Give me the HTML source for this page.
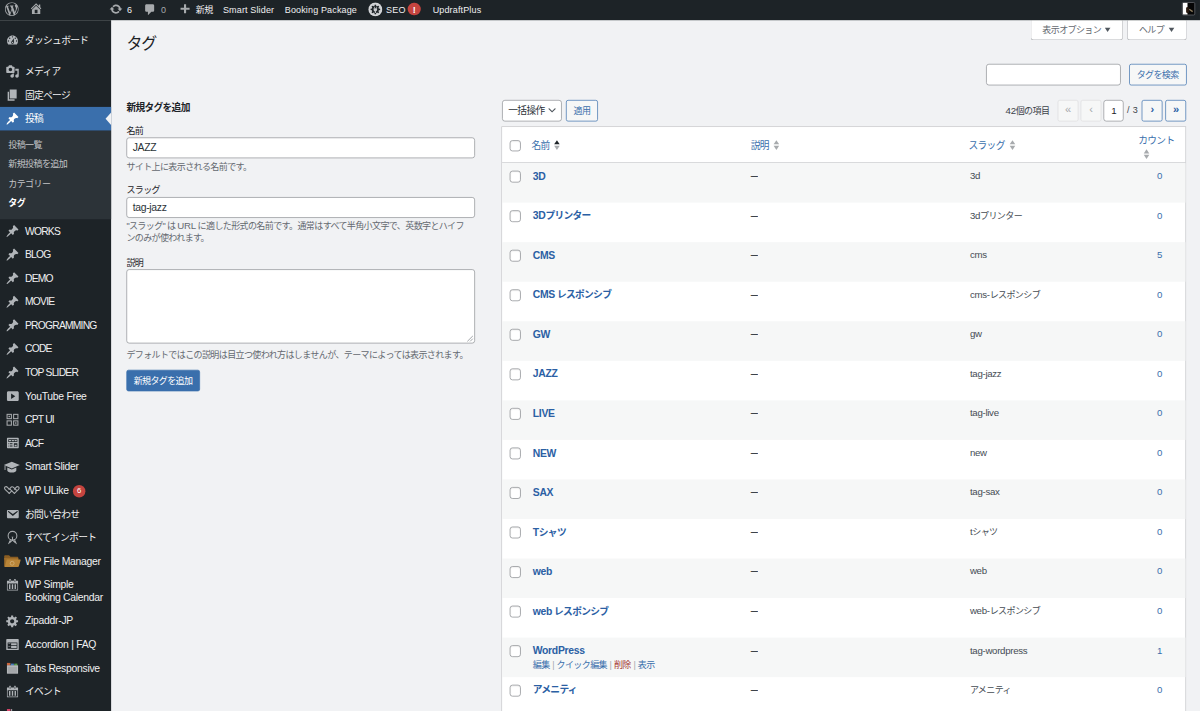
<!DOCTYPE html>
<html lang="ja">
<head>
<meta charset="utf-8">
<title>タグ ‹ WordPress</title>
<style>
html,body{margin:0;padding:0;width:1200px;height:711px;overflow:hidden;background:#f1f2f4;}
body{font-family:"Liberation Sans","Noto Sans CJK JP",sans-serif;color:#3c434a;}
#stage{position:absolute;left:0;top:-2.4px;width:1728px;height:1030px;transform:scale(0.69444,0.6937);transform-origin:0 0;opacity:0.999;font-size:13px;line-height:1.4;background:#f1f2f4;overflow:hidden;}
a{text-decoration:none;color:#3a6fac;}
svg{display:block;}
b.l{font-weight:inherit;}
#stage *{letter-spacing:-0.07em;}
#stage .l{letter-spacing:-0.03em;font-size:107%;}
#stage .l *{letter-spacing:inherit;}
#stage .u{letter-spacing:-0.075em;font-size:106%;}
#stage #menu .l{letter-spacing:-0.028em;}
#stage #bar .l{letter-spacing:0.015em;}

/* ---------- admin bar ---------- */
#bar{position:absolute;left:0;top:0;width:1728px;height:32px;background:#1d2327;color:#f0f0f1;z-index:5;}
#bar .it{position:absolute;top:1px;height:32px;line-height:32px;font-size:13px;color:#f0f0f1;white-space:nowrap;}
#bar svg{position:absolute;fill:#a7aaad;}
#bar .dim{color:#a7aaad;}

/* ---------- side menu ---------- */
#menu{position:absolute;left:0;top:32px;width:160px;height:1000px;background:#1d2327;}
#menu ul{list-style:none;margin:12.2px 0 0;padding:0;}
#menu li.m{position:relative;height:34px;color:#f0f0f1;font-size:14px;line-height:18px;}
#menu li.m .ic{position:absolute;left:8px;top:7px;width:20px;height:20px;}
#menu li.m .ic svg{width:20px;height:20px;fill:#b0b4b8;}
#menu li.m .nm{position:absolute;left:36px;top:8px;white-space:nowrap;}
#menu li.sep{height:5px;margin:0 0 6px;}
#menu li.cur{background:#3a6fac;color:#fff;}
#menu li.cur .ic svg{fill:#fff;}
#menu li.cur:after{content:"";position:absolute;right:0;top:8px;border:9px solid transparent;border-right-width:8px;border-right-color:#f1f2f4;}
#menu li.sub{background:#2c3338;padding:6.5px 0 8.2px;}
#menu li.sub a{display:block;color:#c3c4c7;font-size:13px;line-height:18.2px;padding:5px 12px;}
#menu li.sub a.on{color:#fff;font-weight:bold;}
#menu li.two{height:52px;}
#menu .badge{display:inline-block;vertical-align:top;box-sizing:border-box;margin:1px 0 -1px 2px;padding:0 5px;min-width:18px;height:18px;border-radius:9px;background:#c5443f;color:#fff;font-size:11px;line-height:1.6;text-align:center;}

/* ---------- content ---------- */
#content{position:absolute;left:160px;top:32px;width:1568px;height:1000px;}
.abs{position:absolute;}
h1{position:absolute;left:22px;top:19px;margin:0;font-size:23px;font-weight:400;line-height:29.9px;color:#1d2327;}
.metabtn{position:absolute;top:0;height:28px;box-sizing:content-box;border:1.2px solid #b4b6ba;border-top:none;border-radius:0 0 4px 4px;background:#fff;color:#646970;font-size:13px;line-height:28px;white-space:nowrap;}
.metabtn i{position:absolute;top:11px;width:0;height:0;border:4px solid transparent;border-top:6px solid #50575e;border-bottom:none;}
.inp{position:absolute;box-sizing:border-box;background:#fff;border:1.25px solid #8c8f94;border-radius:4px;font-size:14px;color:#2c3338;padding:0 8px;line-height:28px;white-space:nowrap;}
.btn2{position:absolute;box-sizing:border-box;height:30px;border:1.3px solid #3a6fac;border-radius:3px;background:#f6f7f7;color:#3a6fac;font-size:13px;line-height:28px;text-align:center;white-space:nowrap;}
.btn1{position:absolute;box-sizing:border-box;height:30px;border:1px solid #3a6fac;border-radius:3px;background:#3a6fac;color:#fff;font-size:13px;line-height:28px;text-align:center;white-space:nowrap;}
.lab{position:absolute;left:22px;font-size:13px;line-height:18.2px;color:#1d2327;white-space:nowrap;}
.desc{position:absolute;left:22px;width:540px;font-size:13px;line-height:18.2px;color:#646970;}
.pg{position:absolute;top:114.5px;box-sizing:border-box;height:31px;min-width:30px;border-radius:3px;font-size:16px;line-height:26px;text-align:center;}
.pg.dis{border:1px solid #dcdcde;background:#f6f7f7;color:#a7aaad;}
.pg.en{border:1.3px solid #3a6fac;background:#f6f7f7;color:#2b60a4;font-weight:bold;}

/* ---------- table ---------- */
#tbl{position:absolute;left:562.2px;top:152.5px;width:986px;border:1px solid #c3c4c7;background:#fff;box-sizing:border-box;height:900px;box-shadow:0 1px 1px rgba(0,0,0,.04);}
#tbl .hd{position:relative;height:51.7px;border-bottom:1.3px solid #c0c1c4;font-size:14px;line-height:18.2px;color:#3a6fac;}
#tbl .r{position:relative;height:57px;font-size:13px;line-height:19.5px;color:#454c53;}
#tbl .r.o{background:#f6f7f7;}
#tbl .cb{position:absolute;left:10.5px;box-sizing:border-box;width:16.5px;height:16.5px;border:1.3px solid #85888d;border-radius:4px;background:#fff;box-shadow:inset 0 1px 2px rgba(0,0,0,.1);}
#tbl .hd .cb{top:19px;}
#tbl .r .cb{top:11px;}
#tbl .c1,#tbl .c2,#tbl .c3,#tbl .c4{position:absolute;top:8.9px;white-space:nowrap;}
#tbl .hd .c1,#tbl .hd .c2,#tbl .hd .c3{top:18px;}
#tbl .c1{left:42px;}
#tbl .c2{left:358px;}
#tbl .r .c2{color:#3c434a;font-weight:bold;transform:scaleX(.8);transform-origin:0 50%;}
#tbl .c3{left:671.5px;}
#tbl .r .c3{left:673.5px;}
#tbl .c4{left:909.5px;width:74px;text-align:center;color:#3a6fac;}
#tbl .r .c1{font-size:14px;font-weight:bold;color:#2b60a4;left:44px;}
.ra{word-spacing:1.1px;position:absolute;left:44px;top:30.2px;font-size:13px;line-height:19.5px;color:#a7aaad;white-space:nowrap;}
.ra a{color:#3a6fac;}
.ra a.del{color:#a53934;}
.sort{display:inline-block;vertical-align:top;position:relative;width:10px;height:18px;margin-left:6px;}
.sort:before,.sort:after{content:"";position:absolute;left:1px;border:4px solid transparent;}
.sort:before{top:1px;border-bottom:6px solid #a7aaad;border-top:none;}
.sort:after{top:9.5px;border-top:6px solid #a7aaad;border-bottom:none;}
.sort.asc:before{border-bottom-color:#1d2327;}
</style>
</head>
<body>
<div id="stage">

<!-- ADMIN BAR -->
<div id="bar">
<svg viewBox="0 0 20 20" style="left:7px;top:6px;width:20px;height:20px"><path d="M20 10c0-5.51-4.49-10-10-10C4.48 0 0 4.49 0 10c0 5.52 4.48 10 10 10 5.51 0 10-4.48 10-10zM7.78 15.37L4.37 6.22c.55-.02 1.17-.08 1.17-.08.5-.06.44-1.13-.06-1.11 0 0-1.45.11-2.37.11-.18 0-.37 0-.58-.01C4.12 2.69 6.87 1.11 10 1.11c2.33 0 4.45.87 6.05 2.34-.68-.11-1.65.39-1.65 1.58 0 .74.45 1.36.9 2.1.35.61.55 1.36.55 2.46 0 1.49-1.4 5-1.4 5l-3.03-8.37c.54-.02.82-.17.82-.17.5-.05.44-1.25-.06-1.22 0 0-1.44.12-2.38.12-.87 0-2.33-.12-2.33-.12-.5-.03-.56 1.2-.06 1.22l.92.08 1.26 3.41zM17.41 10c.24-.64.74-1.87.43-4.25.7 1.29 1.05 2.71 1.05 4.25 0 3.29-1.73 6.24-4.4 7.78.97-2.59 1.94-5.2 2.92-7.78zM6.1 18.09C3.12 16.65 1.11 13.53 1.11 10c0-1.3.23-2.48.72-3.59C3.25 10.3 4.67 14.2 6.1 18.09zm4.03-6.63l2.58 6.98c-.86.29-1.76.45-2.71.45-.79 0-1.57-.11-2.29-.33.81-2.38 1.62-4.74 2.42-7.1z"/></svg>
<svg viewBox="0 0 20 20" style="left:42px;top:5px;width:20px;height:20px"><path d="M16 8.5l1.53 1.53-1.06 1.06L10 4.62l-6.47 6.47-1.06-1.06L10 2.5l4 4v-2h2v4zm-6-2.46l6 5.99V18H4v-5.97zM12 17v-5H8v5h4z"/></svg>
<svg viewBox="0 0 20 20" style="left:157px;top:6px;width:20px;height:20px"><path d="M10.2 3.28c3.53 0 6.43 2.61 6.92 6h2.08l-3.5 4-3.5-4h2.32c-.45-1.97-2.21-3.45-4.32-3.45-1.45 0-2.73.71-3.54 1.78L4.95 5.66C6.23 4.2 8.11 3.28 10.2 3.28zm-.4 13.44c-3.52 0-6.43-2.61-6.92-6H.8l3.5-4c1.17 1.33 2.33 2.67 3.5 4H5.480c.45 1.97 2.21 3.45 4.32 3.45 1.45 0 2.73-.71 3.54-1.78l1.710 1.95c-1.28 1.46-3.15 2.38-5.25 2.38z"/></svg>
<div class="it l" style="left:183px">6</div>
<svg viewBox="0 0 20 20" style="left:206px;top:7px;width:20px;height:20px"><path d="M5 2h9c1.1 0 2 .9 2 2v7c0 1.1-.9 2-2 2h-2l-5 5v-5H5c-1.100 0-2-.9-2-2V4c0-1.1.9-2 2-2z"/></svg>
<div class="it dim l" style="left:232px">0</div>
<svg viewBox="0 0 20 20" style="left:256px;top:7px;width:20px;height:20px"><path d="M17 7v3h-5v5H9v-5H4V7h5V2h3v5h5z"/></svg>
<div class="it" style="left:282px">新規</div>
<div class="it l" style="left:321px">Smart Slider</div>
<div class="it l" style="left:410px">Booking Package</div>
<svg viewBox="0 0 20 20" style="left:529.5px;top:5.5px;width:21px;height:21px"><circle cx="10" cy="10" r="9.500" fill="#c9cbce"/><circle cx="10" cy="10" r="8.300" fill="none" stroke="#dfe0e2" stroke-width=".8"/><path d="M9.14 3.46 L10.86 3.46 L11.27 5.27 L12.45 5.75 L14.02 4.77 L15.23 5.98 L14.25 7.55 L14.73 8.73 L16.54 9.14 L16.54 10.86 L14.73 11.27 L14.25 12.45 L15.23 14.02 L14.02 15.23 L12.45 14.25 L11.27 14.73 L10.86 16.54 L9.14 16.54 L8.73 14.73 L7.55 14.25 L5.98 15.23 L4.77 14.02 L5.75 12.45 L5.27 11.27 L3.46 10.86 L3.46 9.14 L5.27 8.73 L5.75 7.55 L4.77 5.98 L5.98 4.77 L7.55 5.75 L8.73 5.27Z" fill="#1d2327"/><path d="M7.600 8.200h4.800v2.200c0 1.200-.8 2-1.700 2.200v2.200H9.300v-2.200c-.9-.2-1.700-1-1.700-2.200z" fill="#c9cbce"/><path d="M8.300 6.300h.9v2h-.9zM10.800 6.300h.9v2h-.9z" fill="#c9cbce"/></svg>
<div class="it l" style="left:556px">SEO</div>
<div class="abs" style="left:587px;top:6.5px;width:18.5px;height:18.5px;border-radius:10px;line-height:18.5px;background:#c5443f;color:#fff;font-size:13px;font-weight:bold;line-height:20px;text-align:center">!</div>
<div class="it l" style="left:623px">UpdraftPlus</div>
<div class="abs" style="left:1702px;top:6px;width:19px;height:19px;background:#050505;border:1px solid #6c7076;border-radius:2px;box-sizing:border-box;overflow:hidden"><span style="position:absolute;left:0;top:0;width:7px;height:17px;background:#fdfdfd"></span><span style="position:absolute;left:5px;top:6px;width:4px;height:9px;background:#2a1a10;border-radius:2px"></span><span style="position:absolute;left:9px;top:10px;width:6px;height:2px;background:#8a7a5c;transform:rotate(35deg)"></span></div>
</div>

<!-- SIDE MENU -->
<div id="menu">
<ul>
<li class="m "><span class="ic"><svg viewBox="0 0 20 20"><path d="M3.76 16h12.48c1.1-1.37 1.76-3.11 1.76-5 0-4.42-3.58-8-8-8s-8 3.58-8 8c0 1.89.66 3.63 1.76 5zM10 4c.55 0 1 .45 1 1s-.45 1-1 1-1-.45-1-1 .45-1 1-1zM6 6c.55 0 1 .45 1 1s-.45 1-1 1-1-.45-1-1 .45-1 1-1zm8 0c.55 0 1 .45 1 1s-.45 1-1 1-1-.45-1-1 .45-1 1-1zm-5.37 5.55L12 7v6c0 1.1-.9 2-2 2s-2-.9-2-2c0-.57.24-1.08.63-1.45zM4 10c.55 0 1 .45 1 1s-.45 1-1 1-1-.45-1-1 .45-1 1-1zm12 0c.55 0 1 .45 1 1s-.45 1-1 1-1-.45-1-1 .45-1 1-1zm-5 3c0-.55-.45-1-1-1s-1 .45-1 1 .45 1 1 1 1-.45 1-1z"/></svg></span><span class="nm">ダッシュボード</span></li>
<li class="sep"></li>
<li class="m "><span class="ic"><svg viewBox="0 0 20 20"><path d="M13 11V4c0-.55-.45-1-1-1h-1.67L9 1H5L3.67 3H2c-.55 0-1 .45-1 1v7c0 .55.45 1 1 1h10c.55 0 1-.45 1-1zM7 4.5c1.38 0 2.5 1.12 2.5 2.5S8.38 9.500 7 9.500 4.500 8.380 4.500 7 5.620 4.500 7 4.500zM14 6h5v10.500c0 1.380-1.120 2.500-2.500 2.500S14 17.880 14 16.500s1.120-2.500 2.500-2.500c.17 0 .34.02.5.05V9h-3V6zm-4 8.050V13h2v3.500c0 1.380-1.120 2.500-2.500 2.500S7 17.880 7 16.500 8.120 14 9.500 14c.17 0 .34.02.5.05z"/></svg></span><span class="nm">メディア</span></li>
<li class="m "><span class="ic"><svg viewBox="0 0 20 20"><path d="M6 15V2h10v13H6zm-1 1h8v2H3V5h2v11z"/></svg></span><span class="nm">固定ページ</span></li>
<li class="m cur"><span class="ic"><svg viewBox="0 0 20 20"><path d="M10.44 3.02l1.82-1.82 6.36 6.35-1.83 1.82c-1.05-.68-2.48-.57-3.41.36l-.75.75c-.92.93-1.04 2.35-.35 3.41l-1.83 1.82-2.41-2.41-2.8 2.79c-.42.42-3.38 2.71-3.8 2.29s1.860-3.390 2.280-3.810l2.790-2.790L4.100 9.360l1.830-1.820c1.050.69 2.480.57 3.400-.36l.75-.75c.93-.92 1.050-2.350.36-3.410z"/></svg></span><span class="nm">投稿</span></li>
<li class="sub"><a>投稿一覧</a><a>新規投稿を追加</a><a>カテゴリー</a><a class="on">タグ</a></li>
<li class="m "><span class="ic"><svg viewBox="0 0 20 20"><path d="M10.44 3.02l1.82-1.82 6.36 6.35-1.83 1.82c-1.05-.68-2.48-.57-3.41.36l-.75.75c-.92.93-1.04 2.35-.35 3.41l-1.83 1.82-2.41-2.41-2.8 2.79c-.42.42-3.38 2.71-3.8 2.29s1.860-3.390 2.280-3.810l2.790-2.790L4.100 9.360l1.830-1.820c1.050.69 2.480.57 3.400-.36l.75-.75c.93-.92 1.050-2.350.36-3.410z"/></svg></span><span class="nm u">WORKS</span></li>
<li class="m "><span class="ic"><svg viewBox="0 0 20 20"><path d="M10.44 3.02l1.82-1.82 6.36 6.35-1.83 1.82c-1.05-.68-2.48-.57-3.41.36l-.75.75c-.92.93-1.04 2.35-.35 3.41l-1.83 1.82-2.41-2.41-2.8 2.79c-.42.42-3.38 2.71-3.8 2.29s1.860-3.390 2.280-3.810l2.790-2.790L4.100 9.360l1.830-1.820c1.050.69 2.480.57 3.400-.36l.75-.75c.93-.92 1.050-2.350.36-3.410z"/></svg></span><span class="nm u">BLOG</span></li>
<li class="m "><span class="ic"><svg viewBox="0 0 20 20"><path d="M10.44 3.02l1.82-1.82 6.36 6.35-1.83 1.82c-1.05-.68-2.48-.57-3.41.36l-.75.75c-.92.93-1.04 2.35-.35 3.41l-1.83 1.82-2.41-2.41-2.8 2.79c-.42.42-3.38 2.71-3.8 2.29s1.860-3.390 2.280-3.810l2.790-2.790L4.100 9.360l1.830-1.820c1.050.69 2.480.57 3.400-.36l.75-.75c.93-.92 1.050-2.350.36-3.410z"/></svg></span><span class="nm u">DEMO</span></li>
<li class="m "><span class="ic"><svg viewBox="0 0 20 20"><path d="M10.44 3.02l1.82-1.82 6.36 6.35-1.83 1.82c-1.05-.68-2.48-.57-3.41.36l-.75.75c-.92.93-1.04 2.35-.35 3.41l-1.83 1.82-2.41-2.41-2.8 2.79c-.42.42-3.38 2.71-3.8 2.29s1.860-3.390 2.280-3.810l2.790-2.790L4.100 9.360l1.830-1.820c1.050.69 2.480.57 3.400-.36l.75-.75c.93-.92 1.050-2.350.36-3.410z"/></svg></span><span class="nm u">MOVIE</span></li>
<li class="m "><span class="ic"><svg viewBox="0 0 20 20"><path d="M10.44 3.02l1.82-1.82 6.36 6.35-1.83 1.82c-1.05-.68-2.48-.57-3.41.36l-.75.75c-.92.93-1.04 2.35-.35 3.41l-1.83 1.82-2.41-2.41-2.8 2.79c-.42.42-3.38 2.71-3.8 2.29s1.860-3.390 2.280-3.810l2.790-2.790L4.100 9.360l1.830-1.820c1.050.69 2.480.57 3.400-.36l.75-.75c.93-.92 1.050-2.350.36-3.410z"/></svg></span><span class="nm u">PROGRAMMING</span></li>
<li class="m "><span class="ic"><svg viewBox="0 0 20 20"><path d="M10.44 3.02l1.82-1.82 6.36 6.35-1.83 1.82c-1.05-.68-2.48-.57-3.41.36l-.75.75c-.92.93-1.04 2.35-.35 3.41l-1.83 1.82-2.41-2.41-2.8 2.79c-.42.42-3.38 2.71-3.8 2.29s1.860-3.390 2.280-3.810l2.790-2.790L4.100 9.360l1.830-1.820c1.050.69 2.480.57 3.400-.36l.75-.75c.93-.92 1.050-2.350.36-3.410z"/></svg></span><span class="nm u">CODE</span></li>
<li class="m "><span class="ic"><svg viewBox="0 0 20 20"><path d="M10.44 3.02l1.82-1.82 6.36 6.35-1.83 1.82c-1.05-.68-2.48-.57-3.41.36l-.75.75c-.92.93-1.04 2.35-.35 3.41l-1.83 1.82-2.41-2.41-2.8 2.79c-.42.42-3.38 2.71-3.8 2.29s1.860-3.390 2.280-3.810l2.790-2.790L4.100 9.360l1.830-1.820c1.050.69 2.480.57 3.400-.36l.75-.75c.93-.92 1.050-2.350.36-3.410z"/></svg></span><span class="nm u">TOP SLIDER</span></li>
<li class="m "><span class="ic"><svg viewBox="0 0 20 20"><path d="M19 15V5c0-1.100-.9-2-2-2H4c-1.100 0-2 .9-2 2v10c0 1.100.9 2 2 2h13c1.100 0 2-.9 2-2zM8 14V6l6 4z"/></svg></span><span class="nm l">YouTube Free</span></li>
<li class="m "><span class="ic"><svg viewBox="0 0 20 20"><g fill="none" stroke="#a7aaad" stroke-width="1.5"><rect x="2.200" y="2.200" width="6.200" height="6.200"/><rect x="11.600" y="2.200" width="6.200" height="6.200"/><rect x="2.200" y="11.600" width="6.200" height="6.200"/><rect x="11.600" y="11.600" width="6.200" height="6.200"/></g><g fill="#a7aaad"><rect x="4.300" y="4.300" width="2" height="2"/><rect x="13.700" y="13.700" width="2" height="2"/></g></svg></span><span class="nm u">CPT UI</span></li>
<li class="m "><span class="ic"><svg viewBox="0 0 20 20"><path d="M19 16V3c0-.55-.45-1-1-1H3c-.55 0-1 .45-1 1v13c0 .55.45 1 1 1h15c.55 0 1-.45 1-1zM4 4h13v4H4V4zm1 1v2h3V5H5zm4 0v2h3V5H9zm4 0v2h3V5h-3zm-8.500 5c.28 0 .5.22.5.5s-.22.5-.5.5-.5-.22-.5-.5.22-.5.5-.5zM6 10h4v1H6v-1zm6 0h5v5h-5v-5zm-7.500 2c.28 0 .5.22.5.5s-.22.5-.5.5-.5-.22-.5-.5.22-.5.5-.5zM6 12h4v1H6v-1zm7 0v2h3v-2h-3zm-8.500 2c.28 0 .5.22.5.5s-.22.5-.5.5-.5-.22-.5-.5.22-.5.5-.5zM6 14h4v1H6v-1z"/></svg></span><span class="nm u">ACF</span></li>
<li class="m "><span class="ic"><svg viewBox="0 0 24 20" style="width:24px;height:20px;margin-left:-3px"><path d="M12 2.500L23.500 7.300 12 12.100.500 7.300z"/><path d="M5.500 10.800v4.200c0 1.700 3 3 6.500 3s6.500-1.300 6.500-3v-4.200L12 13.600z"/><path d="M1.600 8.300h1.300v6.200H1.600z"/></svg></span><span class="nm l">Smart Slider</span></li>
<li class="m "><span class="ic"><svg viewBox="0 0 24 20" style="width:24px;height:20px;margin-left:-3px"><g fill="none" stroke="#a7aaad" stroke-width="1.600" stroke-linejoin="round" stroke-linecap="round"><path d="M8.300 14.200L2.300 8.200c-1.300-1.300-.9-3.200.6-3.700 1.200-.4 2.300.1 3 1.100l2.400 2.600"/><path d="M8.300 8.200l2.300-2.600c.9-1.100 2.400-1.500 3.500-.6l4.600 4.600"/><path d="M8.300 14.200l3.600-3.700"/><path d="M15.700 14.200l-6-6"/><path d="M15.700 14.200l6-6c1.300-1.300.9-3.200-.6-3.700-1.200-.4-2.300.1-3 1.100l-2.400 2.600"/></g></svg></span><span class="nm l">WP ULike <span class="badge">6</span></span></li>
<li class="m "><span class="ic"><svg viewBox="0 0 20 20"><path d="M3.870 4h13.250C18.370 4 19 4.590 19 5.790v8.420c0 1.190-.63 1.790-1.880 1.790H3.870c-1.250 0-1.880-.6-1.880-1.790V5.790c0-1.200.63-1.790 1.880-1.790zm6.620 8.600l6.740-5.530c.24-.2.43-.66.13-1.070-.29-.41-.82-.42-1.170-.17l-5.700 3.860L4.800 5.830c-.35-.25-.88-.24-1.170.17-.3.41-.11.87.13 1.070z"/></svg></span><span class="nm">お問い合わせ</span></li>
<li class="m "><span class="ic"><svg viewBox="0 0 20 22" style="width:20px;height:22px;margin-top:-1px"><g fill="none" stroke="#a7aaad" stroke-width="1.500" stroke-linecap="round"><circle cx="10" cy="8.200" r="6.300"/><path d="M7.200 13.800L4.600 19.500M12.800 13.800l2.600 5.700M10 11v3.500l-4 3.500M10 14.500l4 3.500"/></g><path fill="#a7aaad" d="M8.500 9.500h3l-1.500 2.200z"/></svg></span><span class="nm">すべてインポート</span></li>
<li class="m "><span class="ic"><svg viewBox="0 0 24 20" style="width:25px;height:21px;margin:-1px 0 0 -3px"><path fill="#8a5d22" d="M1 3.500C1 2.700 1.700 2 2.500 2h5.200l2 2.200H19c.8 0 1.500.7 1.500 1.500V8H1z"/><path fill="#a06e2a" d="M1 6h19.500v11c0 .8-.7 1.500-1.500 1.500H2.500C1.700 18.500 1 17.800 1 17z"/><path fill="#b98538" d="M4.500 8H23c.6 0 1 .5.8 1.100l-2.600 8.300c-.2.700-.8 1.100-1.500 1.100H1.800z"/><circle cx="12" cy="13.200" r="2.700" fill="none" stroke="#d9b985" stroke-width=".9"/></svg></span><span class="nm l">WP File Manager</span></li>
<li class="m two"><span class="ic"><svg viewBox="0 0 20 20"><path d="M15 4h3v14H2V4h3V3c0-.83.67-1.500 1.500-1.500S8 2.170 8 3v1h4V3c0-.83.67-1.500 1.500-1.500S15 2.170 15 3v1zM6 3v2.500c0 .28.22.5.5.5s.5-.22.5-.5V3c0-.28-.22-.5-.5-.5S6 2.720 6 3zm7 0v2.500c0 .28.22.5.5.5s.5-.22.5-.5V3c0-.28-.22-.5-.5-.5s-.5.22-.5.5zm4 14V8H3v9h14zM7 16V9H5v7h2zm4 0V9H9v7h2zm4 0V9h-2v7h2z"/></svg></span><span class="nm l">WP Simple<br>Booking Calendar</span></li>
<li class="m "><span class="ic"><svg viewBox="0 0 20 20"><path d="M18 12h-2.180c-.17.7-.44 1.350-.81 1.930l1.540 1.540-2.100 2.100-1.540-1.540c-.58.36-1.230.63-1.910.79V19H8v-2.180c-.68-.16-1.330-.43-1.910-.79l-1.540 1.540-2.120-2.120 1.540-1.540c-.36-.58-.63-1.230-.79-1.910H1V9.030h2.170c.16-.7.44-1.350.8-1.940L2.430 5.550l2.100-2.100 1.540 1.540c.58-.37 1.240-.64 1.930-.81V2h3v2.180c.68.16 1.330.43 1.910.79l1.540-1.540 2.120 2.120-1.540 1.540c.36.59.64 1.240.8 1.940H18V12zm-8.500 1.500c1.660 0 3-1.340 3-3s-1.340-3-3-3-3 1.340-3 3 1.340 3 3 3z"/></svg></span><span class="nm l">Zipaddr-JP</span></li>
<li class="m "><span class="ic"><svg viewBox="0 0 20 20"><path d="M2 2h16c.55 0 1 .45 1 1v14c0 .55-.45 1-1 1H2c-.55 0-1-.45-1-1V3c0-.55.45-1 1-1zm15 14V7H3v9h14zM4 8v1h3V8H4zm4 0v3h8V8H8zm-4 4v1h3v-1H4zm4 0v3h8v-3H8z"/></svg></span><span class="nm l">Accordion | FAQ</span></li>
<li class="m "><span class="ic"><svg viewBox="0 0 20 20"><rect x="2" y="2.500" width="5" height="4" fill="#c8643c"/><rect x="7.500" y="3.500" width="4.500" height="3" fill="#4a7fc0"/><rect x="12.500" y="3.500" width="4.500" height="3" fill="#58a04e"/><rect x="2" y="6" width="16" height="12" fill="#b9bcbf"/><rect x="3.200" y="8" width="13.600" height="8.800" fill="#a4a7aa"/></svg></span><span class="nm l">Tabs Responsive</span></li>
<li class="m "><span class="ic"><svg viewBox="0 0 20 20"><path d="M15 4h3v14H2V4h3V3c0-.83.67-1.500 1.500-1.500S8 2.170 8 3v1h4V3c0-.83.67-1.500 1.500-1.500S15 2.170 15 3v1zM6 3v2.500c0 .28.22.5.5.5s.5-.22.5-.5V3c0-.28-.22-.5-.5-.5S6 2.720 6 3zm7 0v2.500c0 .28.22.5.5.5s.5-.22.5-.5V3c0-.28-.22-.5-.5-.5s-.5.22-.5.5zm4 14V8H3v9h14zM7 16V9H5v7h2zm4 0V9H9v7h2zm4 0V9h-2v7h2z"/></svg></span><span class="nm">イベント</span></li>
<li class="m "><span class="ic"><svg viewBox="0 0 20 20"><rect x="2" y="1" width="5" height="18" fill="#d8456b"/><rect x="8" y="1" width="1.500" height="18" fill="#a7aaad"/></svg></span><span class="nm l">Timeline Addons</span></li>
</ul>
</div>

<!-- CONTENT -->
<div id="content">
<h1>タグ</h1>
<div class="metabtn" style="left:1324px;width:131px"><span style="position:absolute;left:16px">表示オプション</span><i style="left:106px"></i></div>
<div class="metabtn" style="left:1463px;width:84px"><span style="position:absolute;left:16px">ヘルプ</span><i style="left:58.5px"></i></div>

<div class="inp" style="left:1260px;top:62.5px;width:194px;height:31px"></div>
<div class="btn2" style="left:1465.500px;top:62.5px;width:83px;height:31px;line-height:29px">タグを検索</div>

<!-- add tag form -->
<div class="lab" style="top:117px;font-size:14px;font-weight:bold">新規タグを追加</div>
<div class="lab" style="top:150.7px">名前</div>
<div class="inp" style="left:22px;top:168.500px;width:502px;height:30.5px"><span class="l">JAZZ</span></div>
<div class="desc" style="top:202.500px">サイト上に表示される名前です。</div>
<div class="lab" style="top:235.700px">スラッグ</div>
<div class="inp" style="left:22px;top:254.500px;width:502px;height:30.5px"><span class="l">tag-jazz</span></div>
<div class="desc" style="top:287.200px">"スラッグ" は <span class="l">URL</span> に適した形式の名前です。通常はすべて半角小文字で、英数字とハイフ<br>ンのみが使われます。</div>
<div class="lab" style="top:342px">説明</div>
<div class="inp" style="left:22px;top:359px;width:502px;height:106.5px"><svg viewBox="0 0 10 10" style="position:absolute;right:1px;bottom:1px;width:10px;height:10px"><path d="M9 1L1 9M9 5L5 9" stroke="#787c82" stroke-width="1" fill="none"/></svg></div>
<div class="desc" style="top:474px">デフォルトではこの説明は目立つ使われ方はしませんが、テーマによっては表示されます。</div>
<div class="btn1" style="left:21.500px;top:503.5px;width:106.500px;height:31px;line-height:29px">新規タグを追加</div>

<!-- tablenav -->
<div class="inp" style="left:563px;top:114.5px;width:86px;height:31px;padding:0 0 0 8px;font-size:14px;color:#2c3338">一括操作<svg viewBox="0 0 20 20" style="position:absolute;right:5px;top:6px;width:16px;height:16px"><path d="M5 6l5 5 5-5 2 1-7 7-7-7z" fill="#50575e"/></svg></div>
<div class="btn2" style="left:655px;top:114.5px;width:46px;height:31px;line-height:29px">適用</div>
<div class="abs" style="left:1288px;top:115px;line-height:30px;font-size:13px;color:#3c434a;white-space:nowrap"><span class="l">42</span>個の項目</div>
<div class="pg dis" style="left:1362.500px">«</div>
<div class="pg dis" style="left:1395.500px">‹</div>
<div class="inp" style="left:1429px;top:114.5px;width:29px;height:31px;padding:0;text-align:center;font-size:14px;color:#1d2327">1</div>
<div class="abs" style="left:1463px;top:115px;line-height:30px;font-size:13px;color:#3c434a;white-space:nowrap;letter-spacing:0.03em" class="l">/ 3</div>
<div class="pg en" style="left:1484px">›</div>
<div class="pg en" style="left:1518px">»</div>

<!-- table -->
<div id="tbl">
<div class="hd"><span class="cb"></span><span class="c1">名前<i class="sort asc"></i></span><span class="c2">説明<i class="sort"></i></span><span class="c3">スラッグ<i class="sort"></i></span><span class="c4" style="left:905px;top:10px">カウント</span><i class="sort" style="position:absolute;left:922.5px;top:31px;margin:0"></i></div>
<div class="r o"><span class="cb"></span><a class="c1"><b class="l">3D</b></a><span class="c2">—</span><span class="c3"><b class="l">3d</b></span><a class="c4"><b class="l">0</b></a></div>
<div class="r"><span class="cb"></span><a class="c1"><b class="l">3D</b>プリンター</a><span class="c2">—</span><span class="c3"><b class="l">3d</b>プリンター</span><a class="c4"><b class="l">0</b></a></div>
<div class="r o"><span class="cb"></span><a class="c1"><b class="l">CMS</b></a><span class="c2">—</span><span class="c3"><b class="l">cms</b></span><a class="c4"><b class="l">5</b></a></div>
<div class="r"><span class="cb"></span><a class="c1"><b class="l">CMS</b> レスポンシブ</a><span class="c2">—</span><span class="c3"><b class="l">cms-</b>レスポンシブ</span><a class="c4"><b class="l">0</b></a></div>
<div class="r o"><span class="cb"></span><a class="c1"><b class="l">GW</b></a><span class="c2">—</span><span class="c3"><b class="l">gw</b></span><a class="c4"><b class="l">0</b></a></div>
<div class="r"><span class="cb"></span><a class="c1"><b class="l">JAZZ</b></a><span class="c2">—</span><span class="c3"><b class="l">tag-jazz</b></span><a class="c4"><b class="l">0</b></a></div>
<div class="r o"><span class="cb"></span><a class="c1"><b class="l">LIVE</b></a><span class="c2">—</span><span class="c3"><b class="l">tag-live</b></span><a class="c4"><b class="l">0</b></a></div>
<div class="r"><span class="cb"></span><a class="c1"><b class="l">NEW</b></a><span class="c2">—</span><span class="c3"><b class="l">new</b></span><a class="c4"><b class="l">0</b></a></div>
<div class="r o"><span class="cb"></span><a class="c1"><b class="l">SAX</b></a><span class="c2">—</span><span class="c3"><b class="l">tag-sax</b></span><a class="c4"><b class="l">0</b></a></div>
<div class="r"><span class="cb"></span><a class="c1"><b class="l">T</b>シャツ</a><span class="c2">—</span><span class="c3"><b class="l">t</b>シャツ</span><a class="c4"><b class="l">0</b></a></div>
<div class="r o"><span class="cb"></span><a class="c1"><b class="l">web</b></a><span class="c2">—</span><span class="c3"><b class="l">web</b></span><a class="c4"><b class="l">0</b></a></div>
<div class="r"><span class="cb"></span><a class="c1"><b class="l">web</b> レスポンシブ</a><span class="c2">—</span><span class="c3"><b class="l">web-</b>レスポンシブ</span><a class="c4"><b class="l">0</b></a></div>
<div class="r o"><span class="cb"></span><a class="c1"><b class="l">WordPress</b></a><div class="ra"><a>編集</a> | <a>クイック編集</a> | <a class="del">削除</a> | <a>表示</a></div><span class="c2">—</span><span class="c3"><b class="l">tag-wordpress</b></span><a class="c4"><b class="l">1</b></a></div>
<div class="r"><span class="cb"></span><a class="c1">アメニティ</a><span class="c2">—</span><span class="c3">アメニティ</span><a class="c4"><b class="l">0</b></a></div>
<div class="r o"><span class="cb"></span><a class="c1">アンケート</a><span class="c2">—</span><span class="c3">アンケート</span><a class="c4"><b class="l">0</b></a></div>
</div>
</div>

</div>
</body>
</html>
